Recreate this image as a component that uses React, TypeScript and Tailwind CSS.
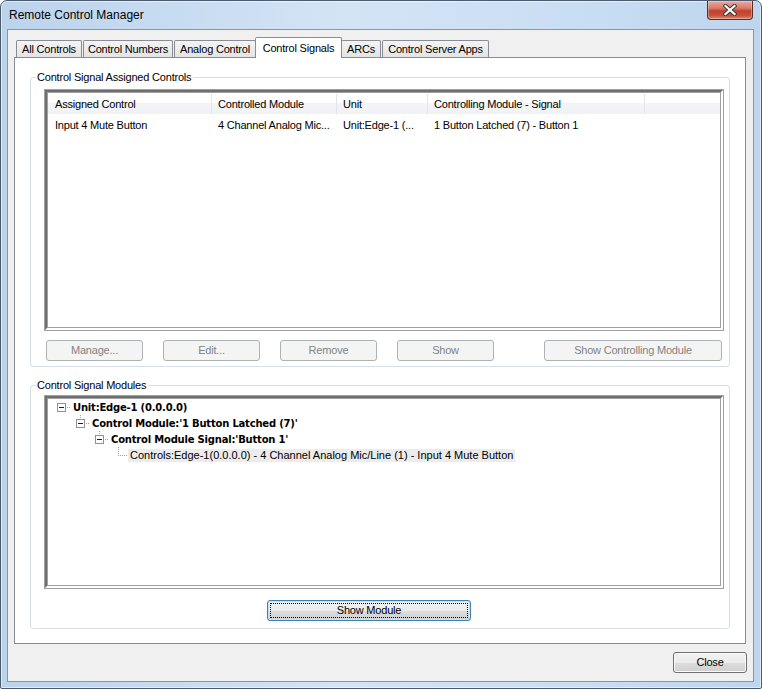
import React from "react";

const sans = "font-['Liberation_Sans',Arial,sans-serif] text-[11px] tracking-[-0.2px]";

type TabDef = { label: string; w: string; selected?: boolean };

const tabs: TabDef[] = [
  { label: "All Controls", w: "w-[66px]" },
  { label: "Control Numbers", w: "w-[90px]" },
  { label: "Analog Control", w: "w-[82px]" },
  { label: "Control Signals", w: "w-[87px]", selected: true },
  { label: "ARCs", w: "w-[40px]" },
  { label: "Control Server Apps", w: "w-[107px]" },
];

function Tab({ t }: { t: TabDef }) {
  if (t.selected) {
    return (
      <div
        className={`${t.w} relative z-10 -mb-px -mx-[2px] h-[21px] border border-b-0 border-[#898c95] rounded-t-[2px] bg-white flex items-center justify-center whitespace-nowrap`}
      >
        {t.label}
      </div>
    );
  }
  return (
    <div
      className={`${t.w} h-[17px] border border-b-0 border-[#898c95] rounded-t-[2px] bg-[linear-gradient(#f4f4f4,#e4e4e4)] flex items-center justify-center whitespace-nowrap`}
    >
      {t.label}
    </div>
  );
}

function Group({
  title,
  className,
  children,
}: {
  title: string;
  className: string;
  children: React.ReactNode;
}) {
  return (
    <fieldset className={`mx-[15px] border border-[#d5dfe5] rounded-[3px] px-[5px] ${className}`}>
      <legend className="pl-[1px] pr-[2px] leading-[12px]">{title}</legend>
      {children}
    </fieldset>
  );
}

function SunkenBox({ className, children }: { className: string; children: React.ReactNode }) {
  return (
    <div className={`border border-[#a0a0a0] bg-white ${className}`}>
      <div className="h-full border-2 border-t-[#6f6f6f] border-l-[#6f6f6f] border-r-white border-b-white">
        <div className="h-full border border-[#a0a0a0] overflow-hidden">{children}</div>
      </div>
    </div>
  );
}

function WinButton({
  label,
  className,
  disabled,
  focused,
}: {
  label: string;
  className: string;
  disabled?: boolean;
  focused?: boolean;
}) {
  if (disabled) {
    return (
      <div
        className={`h-[21px] rounded-[3px] border border-[#adb2b5] bg-[#f4f4f4] text-[#838383] flex items-center justify-center ${className}`}
      >
        {label}
      </div>
    );
  }
  return (
    <div
      className={`relative h-[21px] rounded-[3px] border ${
        focused ? "border-[#3c7fb1] shadow-[inset_0_0_0_1px_#bfe3f8]" : "border-[#707070] shadow-[inset_0_0_0_1px_#fbfbfb]"
      } bg-[linear-gradient(#f2f2f2_0%,#ebebeb_50%,#dddddd_51%,#cfcfcf_100%)] text-black flex items-center justify-center ${className}`}
    >
      {focused && <div className="absolute inset-[2px] border border-dotted border-black" />}
      <span className="relative">{label}</span>
    </div>
  );
}

const dots = (pts: [number, number][]) =>
  pts.map(([x, y], i) => <rect key={i} x={x} y={y} width={1} height={1} fill="#a0a0a0" />);

function Expander({ stub }: { stub: boolean }) {
  return (
    <svg width="19" height="16" viewBox="0 0 19 16" className="shrink-0" shapeRendering="crispEdges">
      {stub && dots([[9, 0], [9, 2]])}
      <rect x="5.5" y="4.5" width="8" height="8" fill="#fdfdfd" stroke="#919191" />
      <rect x="7" y="8" width="5" height="1" fill="#1f1f1f" />
      {dots([[15, 8], [17, 8]])}
    </svg>
  );
}

function LeafLines() {
  return (
    <svg width="19" height="16" viewBox="0 0 19 16" className="shrink-0" shapeRendering="crispEdges">
      {dots([
        [9, 0],
        [9, 2],
        [9, 4],
        [9, 6],
        [9, 8],
        [11, 8],
        [13, 8],
        [15, 8],
        [17, 8],
      ])}
    </svg>
  );
}

const bold = "font-['DejaVu_Sans',Verdana,sans-serif] font-bold text-[10px] tracking-[-0.2px]";

export default function App() {
  return (
    <div
      className={`${sans} relative w-[762px] h-[689px] flex flex-col border border-[#4b5b6e] rounded-t-[7px] rounded-b-[2px] bg-[linear-gradient(90deg,#bcd3ec_0%,#d3e4f5_45%,#cadef3_75%,#bed5ee_100%)] pl-[6px] pr-[7px] pb-[6px] shadow-[inset_0_0_0_1px_rgba(255,255,255,0.55)] text-black`}
    >
      {/* title bar */}
      <div className="h-[28px] flex items-center pl-[2px] text-[12px] tracking-normal">Remote Control Manager</div>
      <div className="absolute top-0 right-[8px] w-[46px] h-[19px] rounded-b-[4px] border border-t-0 border-[#5b2b26] bg-[linear-gradient(#eaa99c_0%,#d97b6a_40%,#c2412d_55%,#c9503b_80%,#dc8a6f_100%)] shadow-[inset_0_0_0_1px_rgba(255,255,255,0.3)] flex items-center justify-center">
        <svg width="14" height="12" viewBox="0 0 14 12">
          <path d="M2.5 2 L11.5 10 M11.5 2 L2.5 10" stroke="#3a3a3a" strokeWidth="4.2" strokeLinecap="square" />
          <path d="M2.5 2 L11.5 10 M11.5 2 L2.5 10" stroke="#ffffff" strokeWidth="2.2" strokeLinecap="square" />
        </svg>
      </div>

      {/* client area */}
      <div className="flex-1 border border-[#8796a8] bg-[#f0f0f0] flex flex-col">
        <div className="flex items-end gap-px pl-[8px] mt-[7px]">
          {tabs.map((t) => (
            <Tab key={t.label} t={t} />
          ))}
        </div>

        <div className="ml-[6px] w-[732px] h-[587px] border border-[#898c95] bg-white flex flex-col">
          <Group title="Control Signal Assigned Controls" className="mt-[13px]">
            <div className="pl-[8px] pt-[6px] pb-[5px]">
              <SunkenBox className="h-[242px]">
                <div className="flex h-[21px] pt-px bg-[linear-gradient(#ffffff_0%,#ffffff_45%,#f3f4f6_46%,#f1f2f4_100%)]">
                  <div className="w-[164px] shrink-0 pl-[7px] border-r border-[#e3e5e8] flex items-center">Assigned Control</div>
                  <div className="w-[125px] shrink-0 pl-[6px] border-r border-[#e3e5e8] flex items-center">Controlled Module</div>
                  <div className="w-[91px] shrink-0 pl-[6px] border-r border-[#e3e5e8] flex items-center">Unit</div>
                  <div className="w-[217px] shrink-0 pl-[6px] border-r border-[#e3e5e8] flex items-center">Controlling Module - Signal</div>
                  <div className="flex-1" />
                </div>
                <div className="flex h-[18px] mt-[2px] items-center whitespace-nowrap">
                  <div className="w-[164px] shrink-0 pl-[7px]">Input 4 Mute Button</div>
                  <div className="w-[125px] shrink-0 pl-[6px]">4 Channel Analog Mic...</div>
                  <div className="w-[91px] shrink-0 pl-[6px]">Unit:Edge-1 (...</div>
                  <div className="w-[217px] shrink-0 pl-[6px]">1 Button Latched (7) - Button 1</div>
                </div>
              </SunkenBox>
              <div className="flex gap-[20px] mt-[9px] px-[2px]">
                <WinButton label="Manage..." className="w-[97px]" disabled />
                <WinButton label="Edit..." className="w-[97px]" disabled />
                <WinButton label="Remove" className="w-[97px]" disabled />
                <WinButton label="Show" className="w-[97px]" disabled />
                <WinButton label="Show Controlling Module" className="w-[178px] ml-auto" disabled />
              </div>
            </div>
          </Group>

          <Group title="Control Signal Modules" className="mt-[12px]">
            <div className="pl-[8px] pt-[4px] pb-[7px]">
              <SunkenBox className="h-[194px]">
                <div className="flex items-center h-[16px] pl-[4px] whitespace-nowrap">
                  <Expander stub={false} />
                  <span className={`${bold} px-[2px]`}>Unit:Edge-1 (0.0.0.0)</span>
                </div>
                <div className="flex items-center h-[16px] pl-[23px] whitespace-nowrap">
                  <Expander stub />
                  <span className={`${bold} px-[2px]`}>Control Module:'1 Button Latched (7)'</span>
                </div>
                <div className="flex items-center h-[16px] pl-[42px] whitespace-nowrap">
                  <Expander stub />
                  <span className={`${bold} px-[2px]`}>Control Module Signal:'Button 1'</span>
                </div>
                <div className="flex items-center h-[16px] pl-[61px] whitespace-nowrap">
                  <LeafLines />
                  <span className="px-[2px] h-[13px] leading-[13px] tracking-normal bg-[#ececec]">
                    Controls:Edge-1(0.0.0.0) - 4 Channel Analog Mic/Line (1) - Input 4 Mute Button
                  </span>
                </div>
              </SunkenBox>
              <WinButton label="Show Module" className="mt-[11px] ml-[223px] w-[204px]" focused />
            </div>
          </Group>
        </div>

        <WinButton label="Close" className="self-end mr-[6px] mt-[8px] w-[74px]" />
      </div>
    </div>
  );
}
